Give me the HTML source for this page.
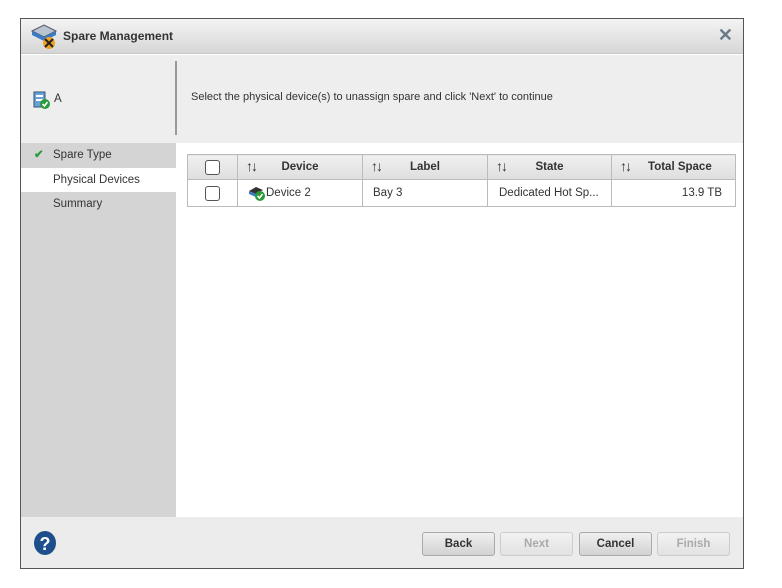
<!DOCTYPE html>
<html><head><meta charset="utf-8"><style>
*{box-sizing:border-box;margin:0;padding:0}
body{width:782px;height:588px;background:#fff;font-family:"Liberation Sans",Arial,sans-serif;font-size:11.5px;color:#333;position:relative;overflow:hidden}
.dlg{position:absolute;left:20px;top:18px;width:724px;height:551px;border:1px solid #555;background:#fff}
.title{position:absolute;left:0;top:0;width:722px;height:35px;background:linear-gradient(#f4f4f4,#d6d6d6);border-bottom:1px solid #c8c8c8}
.title span{position:absolute;left:42px;top:10px;font-weight:bold;font-size:12px;color:#333}
.x{position:absolute;right:10px;top:6px;font-size:18px;color:#6a7a8a;font-weight:bold}
.hdr{position:absolute;left:0;top:36px;width:722px;height:88px;background:#eeeeee}
.sep{position:absolute;left:154px;top:6px;width:2px;height:74px;background:#999}
.left{position:absolute;left:0;top:124px;width:155px;height:374px;background:#d4d4d4}
.step{position:absolute;left:0;width:155px;height:24px;line-height:24px;padding-left:32px;font-size:11.5px;color:#333}
.foot{position:absolute;left:0;top:498px;width:722px;height:51px;background:#ececec}
.btn{position:absolute;top:15px;width:73px;height:24px;border:1px solid #aaa;border-radius:3px;background:linear-gradient(#f0f0f0,#d2d2d2);text-align:center;line-height:22px;font-weight:bold;font-size:11.5px;color:#333}
.btn.dis{color:#aaa;border-color:#ccc;background:linear-gradient(#f2f2f2,#e2e2e2)}
table{position:absolute;left:166px;top:135px;width:549px;border-collapse:collapse}
td,th{border:1px solid #bbb;height:27px;font-size:11.5px}
th{background:linear-gradient(#f0f0f0,#dedede);font-weight:bold;color:#333;height:25px;position:relative}
.cb{display:inline-block;width:15px;height:15px;border:1px solid #555;border-radius:3px;background:#fff;vertical-align:middle}
.ar{position:absolute;left:8px;top:3px;font-weight:normal;font-size:14px;letter-spacing:-2px;color:#333}
</style></head><body>
<div class="dlg">
 <div class="title">
  <svg style="position:absolute;left:9px;top:3px" width="28" height="28" viewBox="0 0 28 28">
   <path d="M2 9 L14 3 L26 9 L14 15 Z" fill="#b8c4d0" stroke="#556" stroke-width="1"/>
   <path d="M2 9 L2 13 L14 19 L26 13 L26 9 L14 15 Z" fill="#3a7bc8"/>
   <circle cx="19" cy="21" r="6" fill="#f0a020"/>
   <path d="M15 17 L23 25 M23 17 L15 25" stroke="#222" stroke-width="2"/>
  </svg>
  <span>Spare Management</span><div class="x">✕</div>
 </div>
 <div class="hdr">
  <svg style="position:absolute;left:11px;top:35px" width="20" height="20" viewBox="0 0 20 20">
   <rect x="2" y="2" width="11" height="15" fill="#6aa0d8" stroke="#357"/>
   <rect x="4" y="5" width="7" height="2" fill="#fff"/><rect x="4" y="9" width="7" height="2" fill="#fff"/>
   <circle cx="13" cy="14" r="5" fill="#2a9a3a"/><path d="M10.5 14 L12.5 16 L15.5 12" stroke="#fff" stroke-width="1.6" fill="none"/>
  </svg>
  <div style="position:absolute;left:33px;top:38px">A</div>
  <div class="sep"></div>
  <div style="position:absolute;left:170px;top:36px;font-size:11px">Select the physical device(s) to unassign spare and click 'Next' to continue</div>
 </div>
 <div class="left">
  <div class="step" style="top:0"><span style="position:absolute;left:13px;color:#2a9a3a;font-weight:bold">✔</span>Spare Type</div>
  <div class="step" style="top:25px;background:#fff">Physical Devices</div>
  <div class="step" style="top:49px">Summary</div>
 </div>
 <table>
  <tr><th style="width:50px"><span class="cb"></span></th><th style="width:125px"><span class="ar">↑↓</span>Device</th><th style="width:125px"><span class="ar">↑↓</span>Label</th><th style="width:124px"><span class="ar">↑↓</span>State</th><th><span class="ar">↑↓</span>&nbsp;&nbsp;&nbsp;&nbsp;Total Space</th></tr>
  <tr><td style="text-align:center"><span class="cb"></span></td>
  <td style="padding-left:10px"><svg width="18" height="16" viewBox="0 0 18 16" style="vertical-align:middle"><path d="M1 6 L8 2 L15 5 L8 9Z" fill="#333"/><path d="M1 6 L1 9 L8 12 L8 9Z" fill="#3a7bc8"/><circle cx="12" cy="11" r="5" fill="#2a9a3a"/><path d="M9.5 11 L11.5 13 L14.5 9" stroke="#fff" stroke-width="1.6" fill="none"/></svg>Device 2</td>
  <td style="padding-left:10px">Bay 3</td><td style="padding-left:11px">Dedicated Hot Sp...</td><td style="text-align:right;padding-right:13px">13.9 TB</td></tr>
 </table>
 <div class="foot">
  <svg style="position:absolute;left:12px;top:13px" width="24" height="26" viewBox="0 0 24 26"><ellipse cx="12" cy="13" rx="11" ry="12" fill="#1d4f8c"/><text x="12" y="20" text-anchor="middle" font-family="Liberation Sans" font-weight="bold" font-size="18" fill="#fff">?</text></svg>
  <div class="btn" style="left:401px">Back</div>
  <div class="btn dis" style="left:479px">Next</div>
  <div class="btn" style="left:558px">Cancel</div>
  <div class="btn dis" style="left:636px">Finish</div>
 </div>
</div>
</body></html>
